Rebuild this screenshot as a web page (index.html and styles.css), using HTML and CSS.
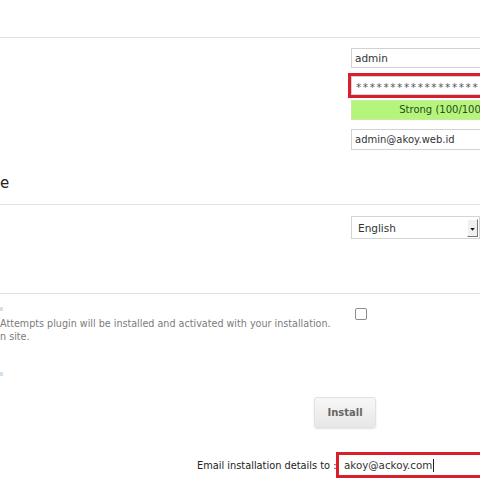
FILE: index.html
```html
<!DOCTYPE html>
<html>
<head>
<meta charset="utf-8">
<link rel="stylesheet" href="styles.css">
</head>
<body>
<div class="page">
  <div class="divider first"></div>

  <div class="row sec1">
    <div class="label"></div>
    <div class="field">
      <div class="input">admin</div>
      <div class="pw-wrap"><div class="input pw">******************</div></div>
      <div class="strength">Strong (100/100)</div>
      <div class="input email">admin@akoy.web.id</div>
    </div>
  </div>

  <h2 class="heading">e</h2>
  <div class="divider"></div>

  <div class="row sec2">
    <div class="label"></div>
    <div class="field">
      <div class="select">
        <span>English</span>
        <span class="arrow"><svg width="10" height="17" viewBox="0 0 10 17"><path d="M2.5 8h5l-2.5 3z" fill="#111"/></svg></span>
      </div>
    </div>
  </div>

  <div class="divider third"></div>

  <div class="row sec3">
    <div class="desc">
      <div class="frag"></div>
      <p class="note">Attempts plugin will be installed and activated with your installation.<br>n site.</p>
      <div class="frag frag2"></div>
    </div>
    <div class="check"></div>
  </div>

  <div class="actions">
    <button class="install">Install</button>
  </div>

  <div class="mail-row">
    <span class="mail-label">Email installation details to :</span>
    <div class="mail-box"><span class="mail-text">akoy@ackoy.com</span><span class="caret"></span></div>
  </div>
</div>
</body>
</html>
```

FILE: styles.css
```css
html, body {
  margin: 0;
  padding: 0;
  overflow: hidden;
  background: #ffffff;
}
.page {
  width: 480px;
  height: 480px;
  font-family: "DejaVu Sans", Verdana, sans-serif;
  color: #333;
  overflow: hidden;
}
.divider {
  height: 1px;
  background: #dbe4e8;
  width: 480px;
}
.divider.first { margin-top: 37px; }
.row { display: flex; }
.label { width: 351px; flex: none; }
.field { width: 182px; flex: none; }
.sec1 { padding-top: 10px; }
.input {
  box-sizing: border-box;
  height: 20px;
  border: 1px solid #d2d2d2;
  background: #fff;
  font-size: 10.5px;
  line-height: 18px;
  padding-left: 3px;
  color: #333;
  white-space: nowrap;
  overflow: hidden;
}
.pw-wrap {
  margin-top: 5px;
  margin-left: -3px;
  border: 3px solid #d91f2b;
  width: 190px;
}
.input.pw {
  height: 19px;
  font-size: 10.5px;
  letter-spacing: 1.6px;
  line-height: 21px;
  color: #555;
  padding-left: 4px;
}
.strength {
  margin-top: 2px;
  height: 20px;
  background: #b6f57c;
  border: 1px solid #c8e8a8;
  box-sizing: border-box;
  font-size: 10px;
  line-height: 18px;
  text-align: center;
  color: #2b4a1c;
  white-space: nowrap;
}
.input.email {
  margin-top: 9px;
  height: 21px;
  line-height: 19px;
  font-size: 10px;
}
.heading {
  margin: 25px 0 0 0;
  height: 29px;
  font-size: 15px;
  font-weight: normal;
  line-height: 16px;
  color: #222;
}
.sec2 { padding-top: 11px; }
.select {
  box-sizing: border-box;
  height: 23px;
  width: 129px;
  border: 1px solid #cfd6d9;
  display: flex;
  align-items: center;
  justify-content: space-between;
  font-size: 10.5px;
  color: #333;
  padding-left: 6px;
  padding-right: 1px;
}
.arrow {
  width: 11px;
  height: 18px;
  background: #f0f0f0;
  border-right: 1px solid #777;
  border-bottom: 1px solid #777;
  border-top: 1px solid #fff;
  border-left: 1px solid #fff;
  box-sizing: border-box;
  display: flex;
}
.divider.third { margin-top: 54px; }
.sec3 { padding-top: 13px; justify-content: space-between; }
.desc { width: 340px; flex: none; }
.frag {
  width: 3px;
  height: 4px;
  background: #cfe0ee;
}
.frag2 { margin-top: 29px; }
.note {
  margin: 6px 0 0 0;
  font-size: 9.6px;
  line-height: 13px;
  color: #7b7b7b;
  white-space: nowrap;
}
.check {
  box-sizing: border-box;
  width: 12px;
  height: 12px;
  border: 1px solid #8c8c8c;
  border-radius: 2px;
  margin-top: 1px;
  margin-right: 113px;
  flex: none;
}
.actions {
  padding-left: 314px;
  margin-top: 21px;
}
.install {
  display: block;
  width: 62px;
  height: 31px;
  border: 1px solid #e2e2e2;
  border-radius: 3px;
  background: linear-gradient(#f7f7f7, #e7e7e7);
  box-shadow: 0 1px 2px rgba(0,0,0,0.12);
  font-family: "DejaVu Sans", Verdana, sans-serif;
  font-weight: bold;
  font-size: 10px;
  color: #666;
  padding: 0;
}
.mail-row {
  display: flex;
  align-items: center;
  margin-top: 24px;
  padding-left: 197px;
}
.mail-label {
  flex: none;
  font-size: 9.8px;
  color: #222;
  white-space: nowrap;
  width: 139px;
}
.mail-box {
  box-sizing: border-box;
  width: 170px;
  height: 26px;
  border: 3px solid #d91f2b;
  display: flex;
  align-items: center;
  padding-left: 5px;
  flex: none;
}
.mail-text {
  font-size: 10.3px;
  color: #333;
}
.caret {
  width: 1px;
  height: 13px;
  background: #222;
  margin-left: 1px;
}
```
